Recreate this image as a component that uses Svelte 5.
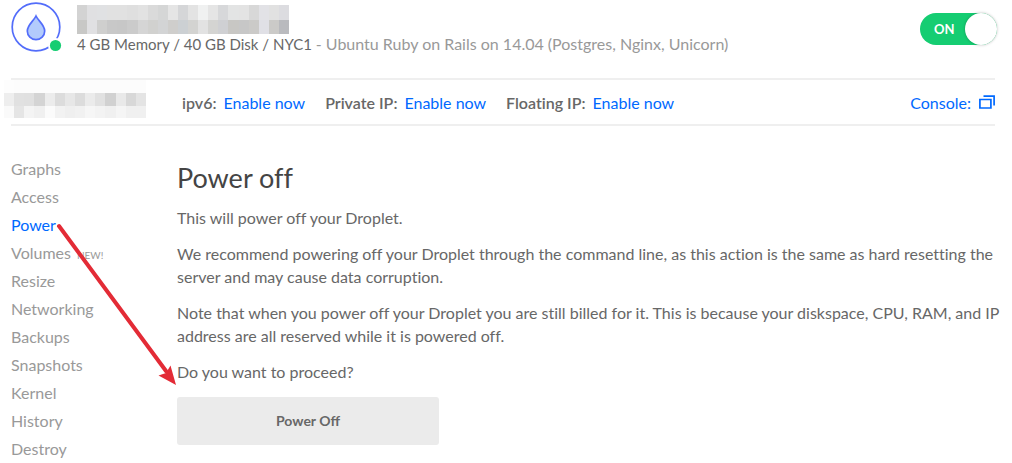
<script>
  const nav = ['Graphs', 'Access', 'Power', 'Volumes', 'Resize', 'Networking', 'Backups', 'Snapshots', 'Kernel', 'History', 'Destroy'];
  const network = ['ipv6:', 'Private IP:', 'Floating IP:'];
  const nameCells = [
    '#d3d3d3', '#e0e0e2', '#e0e1e3', '#e1e1e1', '#e1e1e1', '#dfdfdf', '#e2e2e2', '#dadada', '#d5d6d6', '#e5e5e5', '#d5d6d8', '#e3e3e3', '#f0f1f1', '#e5e5e5', '#d7d8da', '#e3e4e4', '#e3e3e3', '#d8d8d8', '#e2e2e6', '#e1e1e1', '#dcdce0',
    '#c8c8c6', '#e0e0e2', '#cfcfce', '#c8c8c8', '#c7c7c7', '#cbcbcb', '#d5d5d5', '#d1d1cf', '#d3d4d5', '#cfcecc', '#ccd0d3', '#d3d3d1', '#e2e2e2', '#d4d4d2', '#cfd0d3', '#c8c7c4', '#c7c7c7', '#cbcac8', '#e0e0e6', '#cbcac8', '#b9babe'
  ];
  const addressCells = [
    '#fdfdfd', '#fcfcfc', '#fcfcfc', '#fcfcfc', '#fcfcfc', '#fcfcfc', '#fcfcfc', '#fcfcfc', '#fcfcfc', '#fcfcfc', '#fcfcfc', '#fcfcfc', '#fcfcfc', '#fcfcfc',
    '#eeeeee', '#e1e1e1', '#e0e0e0', '#d4d4d4', '#ececec', '#dcdcdc', '#e7e7e7', '#dcdcdc', '#ebebeb', '#e1e1e1', '#d1d1d1', '#e9e9e9', '#d8d8d8', '#e4e4e4',
    '#fafafa', '#e5e5e5', '#f4f4f4', '#f0f0f0', '#fbfbfb', '#f2f2f2', '#efefef', '#f1f1f1', '#f6f6f6', '#f3f3f3', '#f0f0f0', '#f5f5f5', '#f0f0f0', '#f0f0f0'
  ];
  let on = $state(true);
</script>

<div class="page">
  <header>
    <svg class="badge" width="52" height="52" viewBox="0 0 52 52" aria-hidden="true">
      <circle cx="25" cy="25" r="23.800" fill="#fff" stroke="#536dfa" stroke-width="1.700" />
      <path d="M25 14C23 18.500 16.300 23 16.300 29a8.700 8.700 0 0 0 17.400 0C33.700 23 27 18.500 25 14z" fill="#b3cbfc" stroke="#536dfa" stroke-width="1.700" />
      <circle cx="44.500" cy="43.500" r="7.500" fill="#fff" />
      <circle cx="44.500" cy="43.500" r="5.600" fill="#15cd72" />
    </svg>
    <div class="identity">
      <div class="cells name">
        {#each nameCells as c}<i style:background={c}></i>{/each}
      </div>
      <p>4 GB Memory / 40 GB Disk / NYC1 <span>- Ubuntu Ruby on Rails on 14.04 (Postgres, Nginx, Unicorn)</span></p>
    </div>
    <button class="switch" class:off={!on} role="switch" aria-checked={on} onclick={() => (on = !on)}>
      <span>{on ? 'ON' : 'OFF'}</span><b></b>
    </button>
  </header>

  <section class="network">
    <div class="cells address">
      {#each addressCells as c}<i style:background={c}></i>{/each}
    </div>
    <div class="links">
      {#each network as label}
        <div><strong>{label}</strong><a href="#enable">Enable now</a></div>
      {/each}
    </div>
    <a class="console" href="#console">Console:
      <svg width="16" height="14" viewBox="0 0 16 14" fill="none" stroke="#0069ff" stroke-width="1.700" aria-hidden="true">
        <path d="M.9 4.500h11v8.500H.9zM4.500 1.200h10.600v9.300" />
      </svg>
    </a>
  </section>

  <div class="body">
    <nav>
      {#each nav as item}
        <a href={'#' + item.toLowerCase()} class:active={item === 'Power'}>{item}{#if item === 'Volumes'}<small>NEW!</small>{/if}</a>
      {/each}
    </nav>
    <main>
      <h1>Power off</h1>
      <p>This will power off your Droplet.</p>
      <p>We recommend powering off your Droplet through the command line, as this action is the same as hard resetting the server and may cause data corruption.</p>
      <p>Note that when you power off your Droplet you are still billed for it. This is because your diskspace, CPU, RAM, and IP address are all reserved while it is powered off.</p>
      <p>Do you want to proceed?</p>
      <button class="power">Power Off</button>
    </main>
    <svg class="arrow" width="126" height="166" viewBox="0 0 126 166" aria-hidden="true">
      <path d="M5 4L112 149" stroke="#e32b36" stroke-width="4" stroke-linecap="round" />
      <path d="M122 163L104.500 153.500 112 151 116.500 143.500z" fill="#e32b36" />
    </svg>
  </div>
</div>

<style>
  :global(body) { background: #fff; }
  .page {
    padding: 0 17px 0 11px;
    font: 16px/23px Lato, sans-serif;
    font-variant-ligatures: no-common-ligatures;
    color: #676767;
  }
  a { color: #0069ff; text-decoration: none; }
  p, h1 { margin: 0; }
  header { display: flex; align-items: flex-start; padding-top: 2px; height: 78px; box-sizing: border-box; }
  .badge { flex: none; }
  .identity { flex: 1; padding: 3px 0 0 14px; }
  .identity span { color: #999; font-size: 16px; }
  .cells { display: grid; }
  .name { width: 212px; height: 29px; grid-template-columns: repeat(21, 1fr); grid-template-rows: 15px 14px; }
  .identity p { margin-top: -2px; font-size: 15px; }
  .switch {
    display: flex; align-items: center; justify-content: space-between;
    width: 77px; height: 32px; margin: 11px -2px 0 0; padding: 0 0 0 14px;
    border: 0; border-radius: 16px; background: #15cd72; color: #fff;
    font: bold 13px/16px Lato, sans-serif;
  }
  .switch b { width: 32px; height: 32px; border-radius: 50%; background: #fff; box-shadow: 0 0 3px #0004; }
  .switch.off { background: #999; }
  .network {
    display: flex; align-items: center; height: 44px;
    border-top: 2px solid #efefef; border-bottom: 2px solid #efefef;
  }
  .address { width: 142px; height: 38px; margin: -6px 0 0 -7px; grid-template-columns: repeat(14, 1fr); grid-template-rows: 13px 13px 12px; }
  .links { display: flex; flex: 1; gap: 20px; margin-left: 36px; }
  strong { font-weight: 600; margin-right: 7px; }
  .console { display: flex; align-items: center; gap: 8px; }
  .body { position: relative; display: flex; align-items: flex-start; padding-top: 29px; }
  nav { display: flex; flex-direction: column; width: 166px; flex: none; line-height: 28px; }
  nav a { color: #999; }
  nav a.active { color: #0069ff; }
  small { font-size: 10px; line-height: 10px; margin-left: 6px; }
  main { flex: 1; margin-right: -10px; }
  h1 { margin: 6px 0 11px; font-size: 27px; line-height: 34px; font-weight: 400; color: #444; }
  main p { margin-bottom: 13px; }
  .power {
    display: block; width: 262px; height: 48px; margin-top: 14px; border: 0; border-radius: 3px;
    background: #ebebeb; color: #676767; font: bold 14px/20px Lato, sans-serif;
  }
  .arrow { position: absolute; left: 43px; top: 96px; fill: none; pointer-events: none; }
</style>
